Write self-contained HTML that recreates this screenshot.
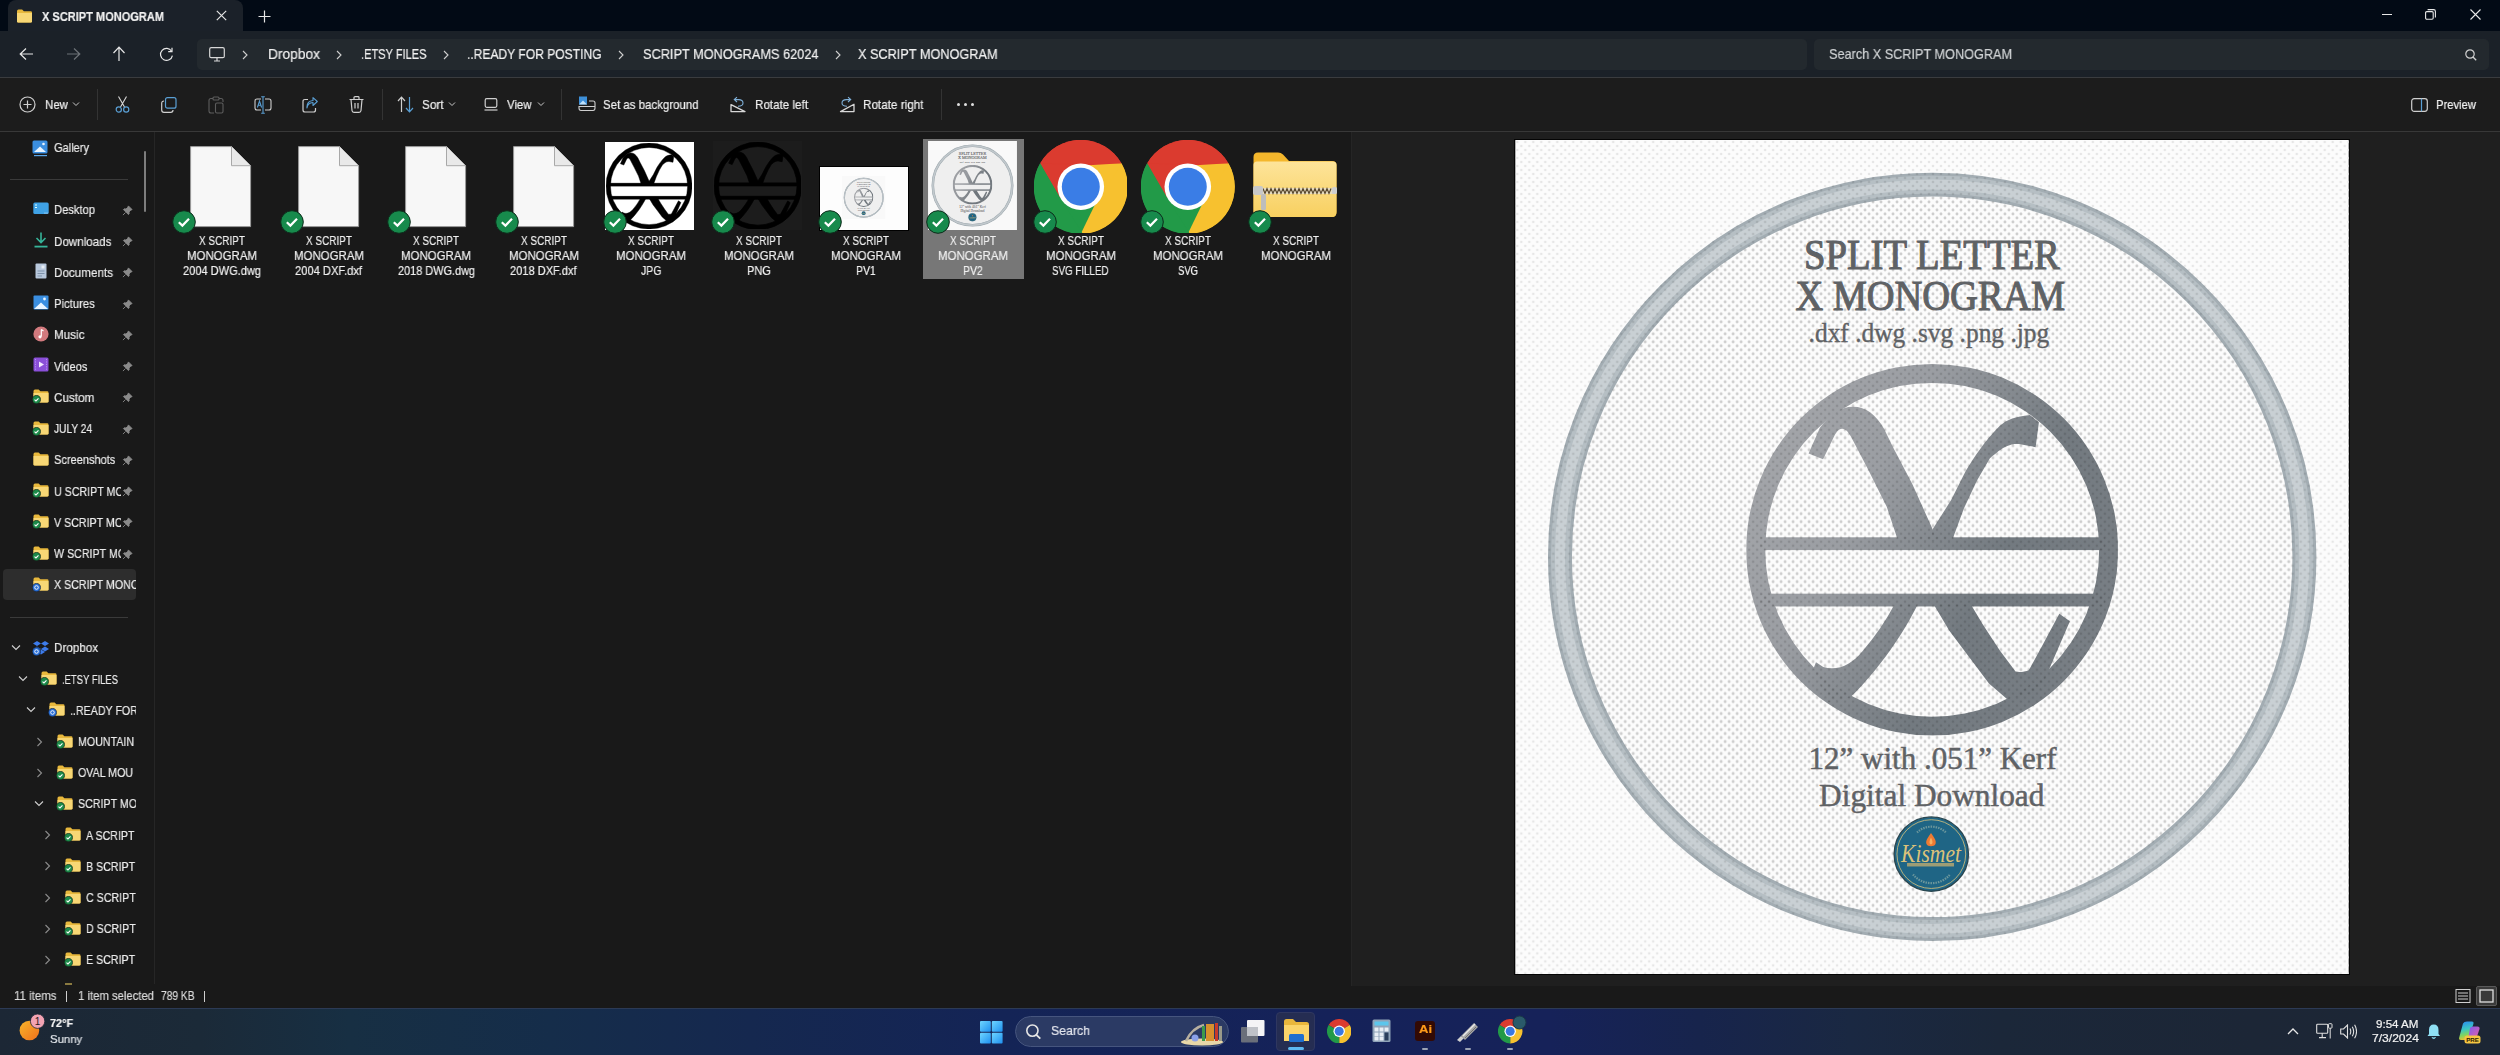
<!DOCTYPE html>
<html><head><meta charset="utf-8">
<style>
*{margin:0;padding:0;box-sizing:border-box}
html,body{width:2500px;height:1055px;overflow:hidden;background:#191919;font-family:"Liberation Sans",sans-serif;color:#e8e8e8;position:relative}
.a{position:absolute;display:block}
.t{position:absolute;white-space:nowrap;line-height:1;transform-origin:0 0;-webkit-text-stroke:0.2px currentColor;will-change:transform}
</style></head><body>
<svg width="0" height="0" style="position:absolute">
<defs>
<symbol id="fold" viewBox="0 0 16 14"><path d="M0.5 2.2 Q0.5 0.5 2 0.5 H5.6 L7.4 2.2 H14.2 Q15.5 2.2 15.5 3.6 V12.2 Q15.5 13.5 14.2 13.5 H1.8 Q0.5 13.5 0.5 12.2 Z" fill="#e8b83c"/><path d="M0.5 4 H15.5 V12.2 Q15.5 13.5 14.2 13.5 H1.8 Q0.5 13.5 0.5 12.2 Z" fill="#f8d775"/></symbol>
<symbol id="chk" viewBox="0 0 10 10"><circle cx="5" cy="5" r="4.6" fill="#1d8a4a" stroke="#111" stroke-width=".6"/><path d="M2.8 5.1 L4.4 6.6 L7.2 3.7" fill="none" stroke="#fff" stroke-width="1.2"/></symbol>
<symbol id="syn" viewBox="0 0 10 10"><circle cx="5" cy="5" r="4.6" fill="#2a6fd6" stroke="#111" stroke-width=".6"/><path d="M3 5 A2 2 0 0 1 7 5 M7 5 A2 2 0 0 1 3 5" fill="none" stroke="#fff" stroke-width="1"/></symbol>
<symbol id="pin" viewBox="0 0 12 12"><path d="M7 1 L11 5 L9.6 5.6 L7.6 7.6 L7.8 9.6 L7 10.4 L1.6 5 L2.4 4.2 L4.4 4.4 L6.4 2.4 Z M3.8 8.2 L1 11" fill="#8a8a8a" stroke="#8a8a8a" stroke-width="1" stroke-linejoin="round"/></symbol>
<symbol id="chev" viewBox="0 0 10 10"><path d="M3.5 1.5 L7 5 L3.5 8.5" fill="none" stroke="#9a9a9a" stroke-width="1.1"/></symbol>
<symbol id="chevd" viewBox="0 0 10 10"><path d="M1.5 3.2 L5 6.7 L8.5 3.2" fill="none" stroke="#cfcfcf" stroke-width="1.1"/></symbol>
<pattern id="dots" width="8.5" height="8.5" patternUnits="userSpaceOnUse"><circle cx="2" cy="2" r="1.1" fill="#c8c8c8"/><circle cx="6.25" cy="6.25" r="1.1" fill="#c8c8c8"/></pattern>
<pattern id="dotsl" width="8.5" height="8.5" patternUnits="userSpaceOnUse"><circle cx="2" cy="2" r="1" fill="#e0e0e0"/><circle cx="6.25" cy="6.25" r="1" fill="#e0e0e0"/></pattern>
<symbol id="mono" viewBox="1746 363 372 372">
<path fill-rule="evenodd" d="M1932.2 363.1 A186 186 0 1 1 1932.2 735.1 A186 186 0 1 1 1932.2 363.1 Z M1932.2 382.1 A167 167 0 1 0 1932.2 716.1 A167 167 0 1 0 1932.2 382.1 Z"/>
<rect x="1760" y="536.6" width="345" height="12.8"/>
<rect x="1760" y="593" width="345" height="12.8"/>
<path d="M1808.5 452.8 L1819.8 427 C1830 414 1840 406 1853 406 C1866 406 1876 414 1884 428 L1893 446.4 L1912.4 483.4 L1932.6 528.5 L1937 540 L1898 540 L1886.7 506 L1867.3 467.3 L1852 438 C1849 432 1846 428 1842 428 C1838 428 1836 432 1833.5 436.7 L1823 458.5 Z"/>
<path d="M1932.6 528.5 L1951 499.6 L1965.6 470.5 C1975 455 1985 440 1999.4 425.4 C2008 418 2015 416 2030 414.2 L2039 421.4 L2035.7 446.4 L2018.8 443.2 C2010 443 2004 445 1989.8 457.7 L1976.9 480 L1964 507.6 L1952 540 L1930 540 Z"/>
<path d="M1894.8 603 L1918 603 C1905 630 1880 668 1850 697 L1828 702 L1813.2 668.3 L1815.9 661.7 L1823.2 666.3 C1838 671 1852 663 1862 651 C1875 636 1886 620 1894.8 603 Z"/>
<path d="M1933.3 603 L1970.5 603 L1982.4 623.2 L1999.7 649.7 L2015.6 671 C2020 672 2025 671 2028.9 669.6 L2042 645.7 L2059.4 613.2 L2070 620.5 L2048.8 669.6 L2040 690 L2007.6 698.8 L1989 682.9 L1969.1 656.3 L1949.2 629.8 Z"/>
</symbol>
<linearGradient id="mgrad" gradientUnits="userSpaceOnUse" x1="1746" y1="450" x2="2118" y2="650"><stop offset="0" stop-color="#a4a6aa"/><stop offset="0.3" stop-color="#9b9ea3"/><stop offset="0.65" stop-color="#737a80"/><stop offset="1" stop-color="#7a8086"/></linearGradient>
<pattern id="dotsr" width="8" height="8" patternUnits="userSpaceOnUse" x="1515" y="139"><circle cx="2" cy="2" r="1.3" fill="#000" fill-opacity=".1"/><circle cx="6" cy="6" r="1.3" fill="#000" fill-opacity=".1"/></pattern>
<pattern id="dotsd" width="8" height="8" patternUnits="userSpaceOnUse" x="1515" y="139"><circle cx="2" cy="2" r="1.3" fill="#000" fill-opacity=".13"/><circle cx="6" cy="6" r="1.3" fill="#000" fill-opacity=".13"/></pattern>
<pattern id="dotsb" width="8" height="8" patternUnits="userSpaceOnUse" x="1515" y="139"><circle cx="2" cy="2" r="1.4" fill="#cdcdcd"/><circle cx="6" cy="6" r="1.4" fill="#cdcdcd"/></pattern>
<pattern id="dotsf" width="8" height="8" patternUnits="userSpaceOnUse" x="1515" y="139"><circle cx="2" cy="2" r="1.3" fill="#e6e6e6"/><circle cx="6" cy="6" r="1.3" fill="#e6e6e6"/></pattern>
<symbol id="pvimg" viewBox="1515 139 834 835">
<rect x="1515" y="139" width="834" height="835" fill="#fcfcfc"/>
<rect x="1515" y="139" width="834" height="835" fill="url(#dotsf)"/>
<circle cx="1932.2" cy="556.15" r="361" fill="url(#dotsb)"/>
<circle cx="1932.2" cy="556.15" r="372.5" fill="none" stroke="#a3adb3" stroke-width="24"/>
<circle cx="1932.2" cy="556.15" r="372.5" fill="none" stroke="#b6bfc4" stroke-width="18"/>
<circle cx="1932.2" cy="556.15" r="372.5" fill="none" stroke="#c9d0d4" stroke-width="10"/>
<circle cx="1932.2" cy="556.15" r="372.5" fill="none" stroke="url(#dotsr)" stroke-width="24"/>
<use href="#mono" x="1746" y="363" width="372" height="372" fill="url(#mgrad)"/>
<use href="#mono" x="1746" y="363" width="372" height="372" fill="url(#dotsd)"/>
<g fill="#5f6265" stroke="#5f6265" stroke-width="1.1" font-family="Liberation Serif">
<text x="1803.9" y="267.8" font-size="42.6" textLength="256.1" lengthAdjust="spacingAndGlyphs">SPLIT LETTER</text>
<text x="1795.3" y="308.9" font-size="42.6" textLength="270" lengthAdjust="spacingAndGlyphs">X MONOGRAM</text>
<text x="1808.5" y="341.4" font-size="26.3" stroke-width="0.4" textLength="240.8" lengthAdjust="spacingAndGlyphs">.dxf .dwg .svg .png .jpg</text>
<text x="1808.5" y="768.7" font-size="32" stroke-width="0.5" textLength="248.1" lengthAdjust="spacingAndGlyphs">12” with .051” Kerf</text>
<text x="1819" y="805.7" font-size="32" stroke-width="0.5" textLength="225.5" lengthAdjust="spacingAndGlyphs">Digital Download</text>
</g>
<circle cx="1931.3" cy="853.6" r="37.2" fill="#1f6585" stroke="#2b4750" stroke-width="1.4"/>
<circle cx="1931.3" cy="853.6" r="34.4" fill="none" stroke="#b5b07c" stroke-width="1"/>
<path d="M1917 832 A21 21 0 0 1 1946 832" fill="none" stroke="#a9bfae" stroke-width="2.2" stroke-dasharray="1.5 1" opacity=".55"/>
<path d="M1913 874 A24 24 0 0 0 1950 874" fill="none" stroke="#a9bfae" stroke-width="2.2" stroke-dasharray="1.5 1" opacity=".55"/>
<path d="M1931 832.5 C1927 838 1925.5 841 1926.5 843.5 C1927.5 846.5 1934.5 846.5 1935.5 843.5 C1936.5 841 1935 838 1931 832.5 Z" fill="#ef7a32"/>
<path d="M1931 837 C1929.5 840 1929 842 1930 843.5 C1931 844.5 1932.5 843.5 1932.5 842 C1932.5 840.5 1932 839 1931 837 Z" fill="#f8b060"/>
<text x="1901" y="862" font-size="26" font-family="Liberation Serif" font-style="italic" fill="#dcc27a" textLength="60" lengthAdjust="spacingAndGlyphs">Kismet</text>
<rect x="1907" y="862.5" width="47" height="3.5" fill="#c8b070" opacity=".75"/>
</symbol>
</defs></svg>
<div class="a" style="left:0px;top:0px;width:2500px;height:31px;background:#020a15;"></div>
<div class="a" style="left:8px;top:0px;width:235px;height:31px;background:#1b2129;border-radius:8px 8px 0 0"></div>
<div class="a" style="left:0px;top:31px;width:2500px;height:46px;background:#1b2128;"></div>
<div class="a" style="left:197px;top:39px;width:1610px;height:31px;background:#23292e;border-radius:5px"></div>
<div class="a" style="left:1814px;top:39px;width:675px;height:31px;background:#23292e;border-radius:5px"></div>
<div class="a" style="left:0px;top:77px;width:2500px;height:1px;background:#3a3c3f;"></div>
<div class="a" style="left:0px;top:78px;width:2500px;height:53px;background:#1c1c1c;"></div>
<div class="a" style="left:0px;top:131px;width:2500px;height:1px;background:#383838;"></div>
<div class="a" style="left:0px;top:132px;width:154px;height:852px;background:#191919;"></div>
<div class="a" style="left:154px;top:132px;width:1px;height:852px;background:#262626;"></div>
<div class="a" style="left:155px;top:132px;width:1196px;height:852px;background:#191919;"></div>
<div class="a" style="left:0px;top:984px;width:2500px;height:24px;background:#191919;"></div>
<div class="a" style="left:1351px;top:132px;width:1px;height:854px;background:#252525;"></div>
<div class="a" style="left:1352px;top:132px;width:1148px;height:854px;background:#1f1f1f;"></div>
<div class="a" style="left:0px;top:1008px;width:2500px;height:47px;background:linear-gradient(90deg,#1c2735 0%,#1b2a38 8%,#172f43 14%,#152d4a 22%,#15284f 30%,#142456 40%,#152259 52%,#162259 62%,#17244c 68%,#1a2842 74%,#1b2739 80%,#1c2636 90%,#1c2634 100%);"></div>
<div class="a" style="left:0px;top:1008px;width:2500px;height:1px;background:#2c3a55;"></div>
<svg class="a" style="left:16px;top:9px;" width="17" height="14" viewBox="0 0 17 14"><use href="#fold" width="17" height="14"/></svg>
<div class="t" style="left:42.00px;top:9.92px;font-size:13px;color:#f2f2f2;font-family:'Liberation Sans';font-weight:700;transform:scaleX(0.8488);">X SCRIPT MONOGRAM</div>
<svg class="a" style="left:216px;top:10px;" width="11" height="11" viewBox="0 0 11 11"><path d="M0.8 0.8 L10.2 10.2 M10.2 0.8 L0.8 10.2" stroke="#e6e6e6" stroke-width="1.2"/></svg>
<svg class="a" style="left:258px;top:10px;" width="13" height="13" viewBox="0 0 13 13"><path d="M6.5 0.5 V12.5 M0.5 6.5 H12.5" stroke="#e6e6e6" stroke-width="1.2"/></svg>
<div class="a" style="left:2382px;top:14px;width:10px;height:1.2px;background:#e8e8e8;"></div>
<svg class="a" style="left:2425px;top:9px;" width="11" height="11" viewBox="0 0 11 11"><rect x="0.6" y="2.6" width="7.6" height="7.6" rx="1.2" fill="none" stroke="#e8e8e8" stroke-width="1.1"/><path d="M2.6 0.6 H8.6 Q10.4 0.6 10.4 2.4 V8.4" fill="none" stroke="#e8e8e8" stroke-width="1.1"/></svg>
<svg class="a" style="left:2470px;top:9px;" width="11" height="11" viewBox="0 0 11 11"><path d="M0.5 0.5 L10.5 10.5 M10.5 0.5 L0.5 10.5" stroke="#e8e8e8" stroke-width="1.1"/></svg>
<svg class="a" style="left:19px;top:47px;" width="15" height="14" viewBox="0 0 15 14"><path d="M14 7 H1.5 M7 1.5 L1.2 7 L7 12.5" fill="none" stroke="#e8e8e8" stroke-width="1.2"/></svg>
<svg class="a" style="left:66px;top:47px;" width="15" height="14" viewBox="0 0 15 14"><path d="M1 7 H13.5 M8 1.5 L13.8 7 L8 12.5" fill="none" stroke="#6d7277" stroke-width="1.2"/></svg>
<svg class="a" style="left:112px;top:46px;" width="14" height="16" viewBox="0 0 14 16"><path d="M7 15 V1.5 M1.5 7 L7 1.2 L12.5 7" fill="none" stroke="#e8e8e8" stroke-width="1.2"/></svg>
<svg class="a" style="left:159px;top:47px;" width="15" height="15" viewBox="0 0 15 15"><path d="M12.6 4.2 A6 6 0 1 0 13.4 8.6" fill="none" stroke="#e8e8e8" stroke-width="1.2"/><path d="M13 0.8 V4.6 H9.2" fill="none" stroke="#e8e8e8" stroke-width="1.2"/></svg>
<svg class="a" style="left:209px;top:47px;" width="16" height="15" viewBox="0 0 16 15"><rect x="0.7" y="0.7" width="14.6" height="10" rx="1.5" fill="none" stroke="#d8d8d8" stroke-width="1.2"/><path d="M5 14 H11 M8 10.7 V14" stroke="#d8d8d8" stroke-width="1.2"/></svg>
<svg class="a" style="left:241px;top:50px;" width="8" height="10" viewBox="0 0 8 10"><path d="M2 1 L6 5 L2 9" fill="none" stroke="#d0d0d0" stroke-width="1.1"/></svg>
<svg class="a" style="left:335px;top:50px;" width="8" height="10" viewBox="0 0 8 10"><path d="M2 1 L6 5 L2 9" fill="none" stroke="#d0d0d0" stroke-width="1.1"/></svg>
<svg class="a" style="left:442px;top:50px;" width="8" height="10" viewBox="0 0 8 10"><path d="M2 1 L6 5 L2 9" fill="none" stroke="#d0d0d0" stroke-width="1.1"/></svg>
<svg class="a" style="left:617px;top:50px;" width="8" height="10" viewBox="0 0 8 10"><path d="M2 1 L6 5 L2 9" fill="none" stroke="#d0d0d0" stroke-width="1.1"/></svg>
<svg class="a" style="left:834px;top:50px;" width="8" height="10" viewBox="0 0 8 10"><path d="M2 1 L6 5 L2 9" fill="none" stroke="#d0d0d0" stroke-width="1.1"/></svg>
<div class="t" style="left:268.00px;top:47.18px;font-size:14.5px;color:#f0f0f0;font-family:'Liberation Sans';transform:scaleX(0.9487);">Dropbox</div>
<div class="t" style="left:360.50px;top:47.18px;font-size:14.5px;color:#f0f0f0;font-family:'Liberation Sans';transform:scaleX(0.7619);">.ETSY FILES</div>
<div class="t" style="left:467.00px;top:47.18px;font-size:14.5px;color:#f0f0f0;font-family:'Liberation Sans';transform:scaleX(0.8319);">..READY FOR POSTING</div>
<div class="t" style="left:642.50px;top:47.18px;font-size:14.5px;color:#f0f0f0;font-family:'Liberation Sans';transform:scaleX(0.8794);">SCRIPT MONOGRAMS 62024</div>
<div class="t" style="left:858.00px;top:47.18px;font-size:14.5px;color:#f0f0f0;font-family:'Liberation Sans';transform:scaleX(0.8760);">X SCRIPT MONOGRAM</div>
<div class="t" style="left:1829.00px;top:46.68px;font-size:14.5px;color:#cfd2d4;font-family:'Liberation Sans';transform:scaleX(0.8747);">Search X SCRIPT MONOGRAM</div>
<svg class="a" style="left:2465px;top:49px;" width="12" height="12" viewBox="0 0 12 12"><circle cx="5" cy="5" r="4.2" fill="none" stroke="#d0d0d0" stroke-width="1.2"/><path d="M8 8 L11.2 11.2" stroke="#d0d0d0" stroke-width="1.3"/></svg>
<svg class="a" style="left:19px;top:96px;" width="17" height="17" viewBox="0 0 17 17"><circle cx="8.5" cy="8.5" r="7.5" fill="none" stroke="#cfcfcf" stroke-width="1.2"/><path d="M8.5 4.5 V12.5 M4.5 8.5 H12.5" stroke="#cfcfcf" stroke-width="1.2"/></svg>
<div class="t" style="left:44.50px;top:98.42px;font-size:13px;color:#f0f0f0;font-family:'Liberation Sans';transform:scaleX(0.8841);">New</div>
<svg class="a" style="left:72px;top:101px;" width="8" height="6" viewBox="0 0 8 6"><path d="M1 1.5 L4 4.5 L7 1.5" fill="none" stroke="#c8c8c8" stroke-width="1"/></svg>
<div class="a" style="left:97px;top:89px;width:1px;height:31px;background:#333333;"></div>
<svg class="a" style="left:115px;top:96px;" width="15" height="17" viewBox="0 0 15 17"><path d="M3.5 0.5 L9.5 11 M11.5 0.5 L5.5 11" stroke="#d8d8d8" stroke-width="1.1" fill="none"/><circle cx="3.8" cy="13.5" r="2.6" fill="none" stroke="#5a9fd4" stroke-width="1.2"/><circle cx="11.2" cy="13.5" r="2.6" fill="none" stroke="#5a9fd4" stroke-width="1.2"/></svg>
<svg class="a" style="left:161px;top:97px;" width="16" height="16" viewBox="0 0 16 16"><rect x="4.5" y="0.7" width="10.5" height="10.5" rx="2" fill="none" stroke="#5a9fd4" stroke-width="1.2"/><path d="M3 4 Q0.7 4 0.7 6.3 V13 Q0.7 15.3 3 15.3 H9.7 Q12 15.3 12 13" fill="none" stroke="#cfcfcf" stroke-width="1.2"/></svg>
<svg class="a" style="left:208px;top:96px;" width="16" height="18" viewBox="0 0 16 18"><path d="M5 2.5 H3 Q1 2.5 1 4.5 V15 Q1 17 3 17 H6 M11 2.5 H13 Q15 2.5 15 4.5 V6" fill="none" stroke="#5d5d5d" stroke-width="1.1"/><rect x="5" y="1" width="6" height="3" rx="1" fill="none" stroke="#5d5d5d" stroke-width="1.1"/><rect x="7.5" y="7" width="7.5" height="10" rx="1.5" fill="none" stroke="#5d5d5d" stroke-width="1.1"/></svg>
<svg class="a" style="left:254px;top:96px;" width="18" height="18" viewBox="0 0 18 18"><path d="M7 3 H3 Q1 3 1 5 V12 Q1 14 3 14 H7 M11 3 H15 Q17 3 17 5 V12 Q17 14 15 14 H11" fill="none" stroke="#cfcfcf" stroke-width="1.1"/><path d="M9 0.7 V17.3 M7.2 0.7 H10.8 M7.2 17.3 H10.8" stroke="#5a9fd4" stroke-width="1.1"/><path d="M3.4 11.5 L5.5 5 L7.6 11.5 M4.2 9.3 H6.8" fill="none" stroke="#5a9fd4" stroke-width="1.1"/></svg>
<svg class="a" style="left:302px;top:97px;" width="16" height="16" viewBox="0 0 16 16"><path d="M6 2.5 H3 Q1 2.5 1 4.5 V13 Q1 15 3 15 H11.5 Q13.5 15 13.5 13 V11" fill="none" stroke="#cfcfcf" stroke-width="1.2"/><path d="M5 11 Q5.5 6 11 5.5 V8.5 L15.3 4.5 L11 0.7 V3.5 Q4.5 4 5 11 Z" fill="none" stroke="#5a9fd4" stroke-width="1.1" stroke-linejoin="round"/></svg>
<svg class="a" style="left:349px;top:96px;" width="15" height="17" viewBox="0 0 15 17"><path d="M0.5 3.5 H14.5 M5 3.5 V1.5 Q5 0.7 6 0.7 H9 Q10 0.7 10 1.5 V3.5" fill="none" stroke="#cfcfcf" stroke-width="1.2"/><path d="M2 3.5 L3 14.5 Q3.2 16.3 5 16.3 H10 Q11.8 16.3 12 14.5 L13 3.5 M6 7 V12.5 M9 7 V12.5" fill="none" stroke="#cfcfcf" stroke-width="1.2"/></svg>
<div class="a" style="left:382px;top:89px;width:1px;height:31px;background:#333333;"></div>
<svg class="a" style="left:397px;top:96px;" width="17" height="17" viewBox="0 0 17 17"><path d="M4.5 16 V1.5 M1 5 L4.5 1.2 L8 5" fill="none" stroke="#cfcfcf" stroke-width="1.2"/><path d="M12.5 1 V15.5 M9 12 L12.5 15.8 L16 12" fill="none" stroke="#5a9fd4" stroke-width="1.2"/></svg>
<div class="t" style="left:422.00px;top:98.42px;font-size:13px;color:#f0f0f0;font-family:'Liberation Sans';transform:scaleX(0.9017);">Sort</div>
<svg class="a" style="left:448px;top:101px;" width="8" height="6" viewBox="0 0 8 6"><path d="M1 1.5 L4 4.5 L7 1.5" fill="none" stroke="#c8c8c8" stroke-width="1"/></svg>
<svg class="a" style="left:484px;top:98px;" width="14" height="13" viewBox="0 0 14 13"><rect x="1.2" y="0.7" width="11.6" height="8.6" rx="1.5" fill="none" stroke="#cfcfcf" stroke-width="1.2"/><path d="M0.5 12 H13.5" stroke="#cfcfcf" stroke-width="1.2"/></svg>
<div class="t" style="left:507.00px;top:98.42px;font-size:13px;color:#f0f0f0;font-family:'Liberation Sans';transform:scaleX(0.8765);">View</div>
<svg class="a" style="left:537px;top:101px;" width="8" height="6" viewBox="0 0 8 6"><path d="M1 1.5 L4 4.5 L7 1.5" fill="none" stroke="#c8c8c8" stroke-width="1"/></svg>
<div class="a" style="left:561px;top:89px;width:1px;height:31px;background:#333333;"></div>
<svg class="a" style="left:578px;top:96px;" width="18" height="16" viewBox="0 0 18 16"><rect x="1" y="0.5" width="8" height="8" fill="#3d8fd8"/><path d="M1 8.5 L5 4.5 L9 8.5 Z" fill="#bfe0fa"/><path d="M11 5 H15 Q17 5 17 7 V12 Q17 14.5 15 14.5 H3 Q1 14.5 1 12 V10.5 H17" fill="none" stroke="#cfcfcf" stroke-width="1.1"/></svg>
<div class="t" style="left:602.50px;top:98.42px;font-size:13px;color:#f0f0f0;font-family:'Liberation Sans';transform:scaleX(0.8809);">Set as background</div>
<svg class="a" style="left:729px;top:96px;" width="18" height="18" viewBox="0 0 18 18"><path d="M2 8.6 V15.6 L16 15.6 Z" fill="none" stroke="#d8d8d8" stroke-width="1.3" stroke-linejoin="round"/><path d="M9 10.2 Q14 10.2 14 7 Q14 3.6 9.5 3.6 H5.5 M8 1.2 L5.3 3.6 L8 6" fill="none" stroke="#7fb0d8" stroke-width="1.1"/></svg>
<div class="t" style="left:754.50px;top:98.42px;font-size:13px;color:#f0f0f0;font-family:'Liberation Sans';transform:scaleX(0.8943);">Rotate left</div>
<svg class="a" style="left:838px;top:96px;" width="18" height="18" viewBox="0 0 18 18"><path d="M16 8.2 V15.6 L2.5 15.6 Z" fill="none" stroke="#d8d8d8" stroke-width="1.3" stroke-linejoin="round"/><path d="M9 10.2 Q4 10.2 4 7 Q4 3.6 8.5 3.6 H12.5 M10 1.2 L12.7 3.6 L10 6" fill="none" stroke="#7fb0d8" stroke-width="1.1"/></svg>
<div class="t" style="left:863.00px;top:98.42px;font-size:13px;color:#f0f0f0;font-family:'Liberation Sans';transform:scaleX(0.9003);">Rotate right</div>
<div class="a" style="left:941px;top:89px;width:1px;height:31px;background:#333333;"></div>
<div class="a" style="left:957.0px;top:103px;width:3px;height:3px;background:#e0e0e0;border-radius:50%"></div>
<div class="a" style="left:964.0px;top:103px;width:3px;height:3px;background:#e0e0e0;border-radius:50%"></div>
<div class="a" style="left:971.0px;top:103px;width:3px;height:3px;background:#e0e0e0;border-radius:50%"></div>
<svg class="a" style="left:2411px;top:98px;" width="17" height="14" viewBox="0 0 17 14"><rect x="0.7" y="0.7" width="15.6" height="12.6" rx="2.5" fill="none" stroke="#cfcfcf" stroke-width="1.2"/><path d="M10.5 0.7 V13.3" stroke="#5a9fd4" stroke-width="1.2"/></svg>
<div class="t" style="left:2435.50px;top:97.92px;font-size:13px;color:#f0f0f0;font-family:'Liberation Sans';transform:scaleX(0.8649);">Preview</div>
<svg class="a" style="left:32px;top:140px;" width="17" height="17" viewBox="0 0 17 17"><rect x="0.5" y="0.5" width="15" height="13" rx="1.5" fill="#3a8ee0"/><path d="M2 12 L8 6.5 L14 12 Z" fill="#e8f4ff"/><circle cx="11.5" cy="4" r="1.3" fill="#e8f4ff"/><path d="M2 15.6 H15" stroke="#5aa6ea" stroke-width="1.2"/></svg>
<div class="t" style="left:54.00px;top:140.72px;font-size:13px;color:#ececec;font-family:'Liberation Sans';transform:scaleX(0.8498);">Gallery</div>
<div class="a" style="left:10px;top:179px;width:118px;height:1px;background:#3a3a3a;"></div>
<div class="a" style="left:144px;top:151px;width:2px;height:61px;background:#7d7d7d;border-radius:1px"></div>
<div class="a" style="left:3px;top:569px;width:133px;height:31px;background:#2d2d2d;border-radius:4px"></div>
<svg class="a" style="left:33px;top:202px;" width="16" height="13" viewBox="0 0 16 13"><rect x="0.3" y="0.5" width="15.4" height="11.5" rx="1.5" fill="#3fa2e6"/><rect x="2" y="2.5" width="2" height="1" fill="#dff"/><rect x="2" y="5" width="2" height="1" fill="#dff"/><circle cx="12" cy="11" r=".5" fill="#fff"/><circle cx="14" cy="11" r=".5" fill="#fff"/></svg>
<div class="t" style="left:54.00px;top:203.32px;font-size:13px;color:#ececec;font-family:'Liberation Sans';transform:scaleX(0.8595);">Desktop</div>
<svg class="a" style="left:122px;top:205px;" width="11" height="11" viewBox="0 0 11 11"><use href="#pin" width="11" height="11"/></svg>
<svg class="a" style="left:34px;top:232px;" width="14" height="16" viewBox="0 0 14 16"><path d="M7 0.5 V10 M2.5 6 L7 10.5 L11.5 6" fill="none" stroke="#36b59a" stroke-width="1.6"/><path d="M0.5 14.6 H13.5" stroke="#36b59a" stroke-width="1.8"/></svg>
<div class="t" style="left:54.00px;top:234.57px;font-size:13px;color:#ececec;font-family:'Liberation Sans';transform:scaleX(0.8939);">Downloads</div>
<svg class="a" style="left:122px;top:236px;" width="11" height="11" viewBox="0 0 11 11"><use href="#pin" width="11" height="11"/></svg>
<svg class="a" style="left:35px;top:263px;" width="12" height="16" viewBox="0 0 12 16"><rect x="0.5" y="0.5" width="11" height="15" rx="1" fill="#b8c8dc"/><rect x="6.5" y="2.5" width="3" height="3" fill="#e8eef6"/><path d="M2.5 8 H9.5 M2.5 10.5 H9.5 M2.5 13 H7" stroke="#7f93ab" stroke-width="1"/></svg>
<div class="t" style="left:54.00px;top:265.82px;font-size:13px;color:#ececec;font-family:'Liberation Sans';transform:scaleX(0.8973);">Documents</div>
<svg class="a" style="left:122px;top:267px;" width="11" height="11" viewBox="0 0 11 11"><use href="#pin" width="11" height="11"/></svg>
<svg class="a" style="left:33px;top:295px;" width="16" height="15" viewBox="0 0 16 15"><rect x="0.5" y="0.5" width="15" height="14" rx="1" fill="#3a8ee0"/><path d="M1 14 L8 7.5 L15 14 Z" fill="#e8f4ff"/><circle cx="11.5" cy="4" r="1.4" fill="#e8f4ff"/></svg>
<div class="t" style="left:54.00px;top:297.07px;font-size:13px;color:#ececec;font-family:'Liberation Sans';transform:scaleX(0.8665);">Pictures</div>
<svg class="a" style="left:122px;top:299px;" width="11" height="11" viewBox="0 0 11 11"><use href="#pin" width="11" height="11"/></svg>
<svg class="a" style="left:33px;top:326px;" width="16" height="16" viewBox="0 0 16 16"><circle cx="8" cy="8" r="7.6" fill="#d27a7e"/><path d="M8.3 3.5 V10.5" stroke="#fff" stroke-width="1.2"/><circle cx="7" cy="10.8" r="1.6" fill="#fff"/><path d="M8.3 3.5 L10.5 5" stroke="#fff" stroke-width="1.2"/></svg>
<div class="t" style="left:54.00px;top:328.32px;font-size:13px;color:#ececec;font-family:'Liberation Sans';transform:scaleX(0.8983);">Music</div>
<svg class="a" style="left:122px;top:330px;" width="11" height="11" viewBox="0 0 11 11"><use href="#pin" width="11" height="11"/></svg>
<svg class="a" style="left:33px;top:357px;" width="16" height="15" viewBox="0 0 16 15"><rect x="0.5" y="0.5" width="15" height="14" rx="1.5" fill="#8a4fd8"/><path d="M6 4.5 L11 7.5 L6 10.5 Z" fill="#f2e8ff"/><path d="M2.5 2 V13 M13.5 2 V13" stroke="#b58cf0" stroke-width="1" stroke-dasharray="1.2 1.2"/></svg>
<div class="t" style="left:54.00px;top:359.57px;font-size:13px;color:#ececec;font-family:'Liberation Sans';transform:scaleX(0.8427);">Videos</div>
<svg class="a" style="left:122px;top:361px;" width="11" height="11" viewBox="0 0 11 11"><use href="#pin" width="11" height="11"/></svg>
<svg class="a" style="left:33px;top:389px" width="16" height="14"><use href="#fold" width="16" height="14"/></svg>
<svg class="a" style="left:32px;top:395px" width="9" height="9"><use href="#chk" width="9" height="9"/></svg>
<div class="t" style="left:54.00px;top:390.82px;font-size:13px;color:#ececec;font-family:'Liberation Sans';transform:scaleX(0.8996);">Custom</div>
<svg class="a" style="left:122px;top:392px;" width="11" height="11" viewBox="0 0 11 11"><use href="#pin" width="11" height="11"/></svg>
<svg class="a" style="left:33px;top:421px" width="16" height="14"><use href="#fold" width="16" height="14"/></svg>
<svg class="a" style="left:32px;top:427px" width="9" height="9"><use href="#chk" width="9" height="9"/></svg>
<div class="t" style="left:54.00px;top:422.07px;font-size:13px;color:#ececec;font-family:'Liberation Sans';transform:scaleX(0.7807);">JULY 24</div>
<svg class="a" style="left:122px;top:424px;" width="11" height="11" viewBox="0 0 11 11"><use href="#pin" width="11" height="11"/></svg>
<svg class="a" style="left:33px;top:452px" width="16" height="14"><use href="#fold" width="16" height="14"/></svg>
<div class="t" style="left:54.00px;top:453.32px;font-size:13px;color:#ececec;font-family:'Liberation Sans';transform:scaleX(0.8469);">Screenshots</div>
<svg class="a" style="left:122px;top:455px;" width="11" height="11" viewBox="0 0 11 11"><use href="#pin" width="11" height="11"/></svg>
<svg class="a" style="left:33px;top:483px" width="16" height="14"><use href="#fold" width="16" height="14"/></svg>
<svg class="a" style="left:32px;top:489px" width="9" height="9"><use href="#chk" width="9" height="9"/></svg>
<div class="t" style="left:54.00px;top:484.57px;font-size:13px;color:#ececec;font-family:'Liberation Sans';transform:scaleX(0.8200);width:81.7px;overflow:hidden;">U SCRIPT MC</div>
<svg class="a" style="left:122px;top:486px;" width="11" height="11" viewBox="0 0 11 11"><use href="#pin" width="11" height="11"/></svg>
<svg class="a" style="left:33px;top:514px" width="16" height="14"><use href="#fold" width="16" height="14"/></svg>
<svg class="a" style="left:32px;top:520px" width="9" height="9"><use href="#chk" width="9" height="9"/></svg>
<div class="t" style="left:54.00px;top:515.82px;font-size:13px;color:#ececec;font-family:'Liberation Sans';transform:scaleX(0.8200);width:81.7px;overflow:hidden;">V SCRIPT MC</div>
<svg class="a" style="left:122px;top:517px;" width="11" height="11" viewBox="0 0 11 11"><use href="#pin" width="11" height="11"/></svg>
<svg class="a" style="left:33px;top:546px" width="16" height="14"><use href="#fold" width="16" height="14"/></svg>
<svg class="a" style="left:32px;top:552px" width="9" height="9"><use href="#chk" width="9" height="9"/></svg>
<div class="t" style="left:54.00px;top:547.07px;font-size:13px;color:#ececec;font-family:'Liberation Sans';transform:scaleX(0.8200);width:81.7px;overflow:hidden;">W SCRIPT MC</div>
<svg class="a" style="left:122px;top:549px;" width="11" height="11" viewBox="0 0 11 11"><use href="#pin" width="11" height="11"/></svg>
<svg class="a" style="left:33px;top:577px" width="16" height="14"><use href="#fold" width="16" height="14"/></svg>
<svg class="a" style="left:32px;top:583px" width="9" height="9"><use href="#syn" width="9" height="9"/></svg>
<div class="t" style="left:54.00px;top:578.32px;font-size:13px;color:#ececec;font-family:'Liberation Sans';transform:scaleX(0.8200);width:100.0px;overflow:hidden;">X SCRIPT MONOGRAM</div>
<div class="a" style="left:10px;top:616.5px;width:118px;height:1px;background:#3a3a3a;"></div>
<svg class="a" style="left:11px;top:644px;" width="10" height="8" viewBox="0 0 10 8"><path d="M1 1.5 L5 5.5 L9 1.5" fill="none" stroke="#d0d0d0" stroke-width="1.1"/></svg>
<svg class="a" style="left:33px;top:640px;" width="17" height="15" viewBox="0 0 17 15"><path d="M4 1 L8 3.5 L4 6 L0 3.5 Z M12 1 L16 3.5 L12 6 L8 3.5 Z M4 6.5 L8 9 L4 11.5 L0 9 Z M12 6.5 L16 9 L12 11.5 L8 9 Z M4 12 L8 9.6 L12 12 L8 14.4 Z" fill="#3d7bea"/></svg>
<svg class="a" style="left:32px;top:647px" width="9" height="9"><use href="#syn" width="9" height="9"/></svg>
<div class="t" style="left:54.00px;top:641.32px;font-size:13px;color:#ececec;font-family:'Liberation Sans';transform:scaleX(0.8954);width:91.6px;overflow:hidden;">Dropbox</div>
<svg class="a" style="left:18px;top:675px;" width="10" height="8" viewBox="0 0 10 8"><path d="M1 1.5 L5 5.5 L9 1.5" fill="none" stroke="#d0d0d0" stroke-width="1.1"/></svg>
<svg class="a" style="left:41px;top:671px" width="16" height="14"><use href="#fold" width="16" height="14"/></svg>
<svg class="a" style="left:40px;top:677px" width="9" height="9"><use href="#chk" width="9" height="9"/></svg>
<div class="t" style="left:61.90px;top:672.52px;font-size:13px;color:#ececec;font-family:'Liberation Sans';transform:scaleX(0.7265);width:102.0px;overflow:hidden;">.ETSY FILES</div>
<svg class="a" style="left:26px;top:706px;" width="10" height="8" viewBox="0 0 10 8"><path d="M1 1.5 L5 5.5 L9 1.5" fill="none" stroke="#d0d0d0" stroke-width="1.1"/></svg>
<svg class="a" style="left:49px;top:702px" width="16" height="14"><use href="#fold" width="16" height="14"/></svg>
<svg class="a" style="left:48px;top:708px" width="9" height="9"><use href="#syn" width="9" height="9"/></svg>
<div class="t" style="left:69.80px;top:703.72px;font-size:13px;color:#ececec;font-family:'Liberation Sans';transform:scaleX(0.8200);width:80.7px;overflow:hidden;">..READY FOR</div>
<svg class="a" style="left:36px;top:737px;" width="7" height="10" viewBox="0 0 7 10"><path d="M1.5 1 L5.5 5 L1.5 9" fill="none" stroke="#8c8c8c" stroke-width="1.1"/></svg>
<svg class="a" style="left:57px;top:734px" width="16" height="14"><use href="#fold" width="16" height="14"/></svg>
<svg class="a" style="left:56px;top:740px" width="9" height="9"><use href="#chk" width="9" height="9"/></svg>
<div class="t" style="left:77.70px;top:734.92px;font-size:13px;color:#ececec;font-family:'Liberation Sans';transform:scaleX(0.8200);width:71.1px;overflow:hidden;">MOUNTAIN</div>
<svg class="a" style="left:36px;top:768px;" width="7" height="10" viewBox="0 0 7 10"><path d="M1.5 1 L5.5 5 L1.5 9" fill="none" stroke="#8c8c8c" stroke-width="1.1"/></svg>
<svg class="a" style="left:57px;top:765px" width="16" height="14"><use href="#fold" width="16" height="14"/></svg>
<svg class="a" style="left:56px;top:771px" width="9" height="9"><use href="#chk" width="9" height="9"/></svg>
<div class="t" style="left:77.70px;top:766.12px;font-size:13px;color:#ececec;font-family:'Liberation Sans';transform:scaleX(0.8200);width:71.1px;overflow:hidden;">OVAL MOU</div>
<svg class="a" style="left:34px;top:800px;" width="10" height="8" viewBox="0 0 10 8"><path d="M1 1.5 L5 5.5 L9 1.5" fill="none" stroke="#d0d0d0" stroke-width="1.1"/></svg>
<svg class="a" style="left:57px;top:796px" width="16" height="14"><use href="#fold" width="16" height="14"/></svg>
<svg class="a" style="left:56px;top:802px" width="9" height="9"><use href="#chk" width="9" height="9"/></svg>
<div class="t" style="left:77.70px;top:797.32px;font-size:13px;color:#ececec;font-family:'Liberation Sans';transform:scaleX(0.8200);width:71.1px;overflow:hidden;">SCRIPT MO</div>
<svg class="a" style="left:44px;top:830px;" width="7" height="10" viewBox="0 0 7 10"><path d="M1.5 1 L5.5 5 L1.5 9" fill="none" stroke="#8c8c8c" stroke-width="1.1"/></svg>
<svg class="a" style="left:65px;top:827px" width="16" height="14"><use href="#fold" width="16" height="14"/></svg>
<svg class="a" style="left:64px;top:833px" width="9" height="9"><use href="#chk" width="9" height="9"/></svg>
<div class="t" style="left:85.60px;top:828.52px;font-size:13px;color:#ececec;font-family:'Liberation Sans';transform:scaleX(0.8200);width:61.5px;overflow:hidden;">A SCRIPT</div>
<svg class="a" style="left:44px;top:861px;" width="7" height="10" viewBox="0 0 7 10"><path d="M1.5 1 L5.5 5 L1.5 9" fill="none" stroke="#8c8c8c" stroke-width="1.1"/></svg>
<svg class="a" style="left:65px;top:858px" width="16" height="14"><use href="#fold" width="16" height="14"/></svg>
<svg class="a" style="left:64px;top:864px" width="9" height="9"><use href="#chk" width="9" height="9"/></svg>
<div class="t" style="left:85.60px;top:859.72px;font-size:13px;color:#ececec;font-family:'Liberation Sans';transform:scaleX(0.8200);width:61.5px;overflow:hidden;">B SCRIPT I</div>
<svg class="a" style="left:44px;top:893px;" width="7" height="10" viewBox="0 0 7 10"><path d="M1.5 1 L5.5 5 L1.5 9" fill="none" stroke="#8c8c8c" stroke-width="1.1"/></svg>
<svg class="a" style="left:65px;top:890px" width="16" height="14"><use href="#fold" width="16" height="14"/></svg>
<svg class="a" style="left:64px;top:896px" width="9" height="9"><use href="#chk" width="9" height="9"/></svg>
<div class="t" style="left:85.60px;top:890.92px;font-size:13px;color:#ececec;font-family:'Liberation Sans';transform:scaleX(0.8200);width:61.5px;overflow:hidden;">C SCRIPT</div>
<svg class="a" style="left:44px;top:924px;" width="7" height="10" viewBox="0 0 7 10"><path d="M1.5 1 L5.5 5 L1.5 9" fill="none" stroke="#8c8c8c" stroke-width="1.1"/></svg>
<svg class="a" style="left:65px;top:921px" width="16" height="14"><use href="#fold" width="16" height="14"/></svg>
<svg class="a" style="left:64px;top:927px" width="9" height="9"><use href="#chk" width="9" height="9"/></svg>
<div class="t" style="left:85.60px;top:922.12px;font-size:13px;color:#ececec;font-family:'Liberation Sans';transform:scaleX(0.8200);width:61.5px;overflow:hidden;">D SCRIPT</div>
<svg class="a" style="left:44px;top:955px;" width="7" height="10" viewBox="0 0 7 10"><path d="M1.5 1 L5.5 5 L1.5 9" fill="none" stroke="#8c8c8c" stroke-width="1.1"/></svg>
<svg class="a" style="left:65px;top:952px" width="16" height="14"><use href="#fold" width="16" height="14"/></svg>
<svg class="a" style="left:64px;top:958px" width="9" height="9"><use href="#chk" width="9" height="9"/></svg>
<div class="t" style="left:85.60px;top:953.32px;font-size:13px;color:#ececec;font-family:'Liberation Sans';transform:scaleX(0.8200);width:61.5px;overflow:hidden;">E SCRIPT I</div>
<div class="a" style="left:65px;top:983px;width:7px;height:2px;background:#8a7a40;"></div>
<div class="t" style="left:14.00px;top:990.00px;font-size:12.5px;color:#dcdcdc;font-family:'Liberation Sans';transform:scaleX(0.9174);">11 items</div>
<div class="a" style="left:66px;top:991px;width:1px;height:11px;background:#cfcfcf;"></div>
<div class="t" style="left:78.00px;top:990.00px;font-size:12.5px;color:#dcdcdc;font-family:'Liberation Sans';transform:scaleX(0.9039);">1 item selected</div>
<div class="t" style="left:160.50px;top:990.00px;font-size:12.5px;color:#dcdcdc;font-family:'Liberation Sans';transform:scaleX(0.8168);">789 KB</div>
<div class="a" style="left:204px;top:991px;width:1px;height:11px;background:#cfcfcf;"></div>
<svg class="a" style="left:2455px;top:988px;" width="16" height="16" viewBox="0 0 16 16"><rect x="1" y="1.5" width="14" height="13" fill="none" stroke="#cfcfcf" stroke-width="1"/><path d="M3 5 H13 M3 8 H13 M3 11 H13" stroke="#cfcfcf" stroke-width="1"/></svg>
<div class="a" style="left:2476px;top:986px;width:21px;height:20px;background:#3a3a3a;border:1px solid #5a5a5a;border-radius:2px"></div>
<svg class="a" style="left:2479px;top:989px;" width="15" height="14" viewBox="0 0 15 14"><rect x="1" y="1" width="13" height="12" fill="none" stroke="#e0e0e0" stroke-width="1.3"/></svg>
<div class="a" style="left:922.5px;top:138.8px;width:101.5px;height:140.7px;background:#777777;"></div>
<svg class="a" style="left:190px;top:146px;" width="62" height="82" viewBox="0 0 62 82"><path d="M0.6 0.6 H41.5 L60.6 19.7 V80.6 H0.6 Z" fill="#f7f7f7" stroke="#9a9a9a" stroke-width="1"/><path d="M41.5 0.6 V19.7 H60.6" fill="#e9e9e9" stroke="#a8a8a8" stroke-width="1"/></svg>
<svg class="a" style="left:172.3px;top:210px;" width="24" height="24" viewBox="0 0 24 24"><circle cx="12" cy="12" r="11.3" fill="#178a4c" stroke="#0d2a1a" stroke-width="1"/><path d="M6.8 12.3 L10.4 15.6 L17 8.8" fill="none" stroke="#fff" stroke-width="2.2"/></svg>
<div class="t" style="left:198.50px;top:234.32px;font-size:13px;color:#f0f0f0;font-family:'Liberation Sans';transform:scaleX(0.7671);">X SCRIPT</div>
<div class="t" style="left:186.50px;top:249.02px;font-size:13px;color:#f0f0f0;font-family:'Liberation Sans';transform:scaleX(0.8810);">MONOGRAM</div>
<div class="t" style="left:182.50px;top:263.72px;font-size:13px;color:#f0f0f0;font-family:'Liberation Sans';transform:scaleX(0.8500);">2004 DWG.dwg</div>
<svg class="a" style="left:298px;top:146px;" width="62" height="82" viewBox="0 0 62 82"><path d="M0.6 0.6 H41.5 L60.6 19.7 V80.6 H0.6 Z" fill="#f7f7f7" stroke="#9a9a9a" stroke-width="1"/><path d="M41.5 0.6 V19.7 H60.6" fill="#e9e9e9" stroke="#a8a8a8" stroke-width="1"/></svg>
<svg class="a" style="left:279.7px;top:210px;" width="24" height="24" viewBox="0 0 24 24"><circle cx="12" cy="12" r="11.3" fill="#178a4c" stroke="#0d2a1a" stroke-width="1"/><path d="M6.8 12.3 L10.4 15.6 L17 8.8" fill="none" stroke="#fff" stroke-width="2.2"/></svg>
<div class="t" style="left:305.90px;top:234.32px;font-size:13px;color:#f0f0f0;font-family:'Liberation Sans';transform:scaleX(0.7671);">X SCRIPT</div>
<div class="t" style="left:293.90px;top:249.02px;font-size:13px;color:#f0f0f0;font-family:'Liberation Sans';transform:scaleX(0.8810);">MONOGRAM</div>
<div class="t" style="left:295.40px;top:263.72px;font-size:13px;color:#f0f0f0;font-family:'Liberation Sans';transform:scaleX(0.8585);">2004 DXF.dxf</div>
<svg class="a" style="left:405px;top:146px;" width="62" height="82" viewBox="0 0 62 82"><path d="M0.6 0.6 H41.5 L60.6 19.7 V80.6 H0.6 Z" fill="#f7f7f7" stroke="#9a9a9a" stroke-width="1"/><path d="M41.5 0.6 V19.7 H60.6" fill="#e9e9e9" stroke="#a8a8a8" stroke-width="1"/></svg>
<svg class="a" style="left:387.1px;top:210px;" width="24" height="24" viewBox="0 0 24 24"><circle cx="12" cy="12" r="11.3" fill="#178a4c" stroke="#0d2a1a" stroke-width="1"/><path d="M6.8 12.3 L10.4 15.6 L17 8.8" fill="none" stroke="#fff" stroke-width="2.2"/></svg>
<div class="t" style="left:413.30px;top:234.32px;font-size:13px;color:#f0f0f0;font-family:'Liberation Sans';transform:scaleX(0.7671);">X SCRIPT</div>
<div class="t" style="left:401.30px;top:249.02px;font-size:13px;color:#f0f0f0;font-family:'Liberation Sans';transform:scaleX(0.8810);">MONOGRAM</div>
<div class="t" style="left:397.80px;top:263.72px;font-size:13px;color:#f0f0f0;font-family:'Liberation Sans';transform:scaleX(0.8391);">2018 DWG.dwg</div>
<svg class="a" style="left:513px;top:146px;" width="62" height="82" viewBox="0 0 62 82"><path d="M0.6 0.6 H41.5 L60.6 19.7 V80.6 H0.6 Z" fill="#f7f7f7" stroke="#9a9a9a" stroke-width="1"/><path d="M41.5 0.6 V19.7 H60.6" fill="#e9e9e9" stroke="#a8a8a8" stroke-width="1"/></svg>
<svg class="a" style="left:494.50000000000006px;top:210px;" width="24" height="24" viewBox="0 0 24 24"><circle cx="12" cy="12" r="11.3" fill="#178a4c" stroke="#0d2a1a" stroke-width="1"/><path d="M6.8 12.3 L10.4 15.6 L17 8.8" fill="none" stroke="#fff" stroke-width="2.2"/></svg>
<div class="t" style="left:520.70px;top:234.32px;font-size:13px;color:#f0f0f0;font-family:'Liberation Sans';transform:scaleX(0.7671);">X SCRIPT</div>
<div class="t" style="left:508.70px;top:249.02px;font-size:13px;color:#f0f0f0;font-family:'Liberation Sans';transform:scaleX(0.8810);">MONOGRAM</div>
<div class="t" style="left:510.45px;top:263.72px;font-size:13px;color:#f0f0f0;font-family:'Liberation Sans';transform:scaleX(0.8521);">2018 DXF.dxf</div>
<div class="a" style="left:605px;top:141.5px;width:89px;height:88px;background:#ffffff;"></div>
<svg class="a" style="left:606px;top:142.5px;" width="86" height="86" viewBox="0 0 86 86"><use href="#mono" width="86" height="86" fill="#000" stroke="#000" stroke-width="2"/><circle cx="43" cy="43" r="40.5" fill="none" stroke="#000" stroke-width="1.6"/></svg>
<svg class="a" style="left:603.3000000000001px;top:210px;" width="24" height="24" viewBox="0 0 24 24"><circle cx="12" cy="12" r="11.3" fill="#178a4c" stroke="#0d2a1a" stroke-width="1"/><path d="M6.8 12.3 L10.4 15.6 L17 8.8" fill="none" stroke="#fff" stroke-width="2.2"/></svg>
<div class="t" style="left:628.10px;top:234.32px;font-size:13px;color:#f0f0f0;font-family:'Liberation Sans';transform:scaleX(0.7671);">X SCRIPT</div>
<div class="t" style="left:616.10px;top:249.02px;font-size:13px;color:#f0f0f0;font-family:'Liberation Sans';transform:scaleX(0.8810);">MONOGRAM</div>
<div class="t" style="left:640.90px;top:263.72px;font-size:13px;color:#f0f0f0;font-family:'Liberation Sans';transform:scaleX(0.8064);">JPG</div>
<div class="a" style="left:713px;top:141px;width:89px;height:89px;background:#1c1c1c;"></div>
<svg class="a" style="left:713.5px;top:141.6px;" width="87.5" height="87.7" viewBox="0 0 87.5 87.7"><use href="#mono" width="87.5" height="87.7" fill="#000" stroke="#000" stroke-width="3"/><circle cx="43.75" cy="43.85" r="41.5" fill="none" stroke="#000" stroke-width="2"/></svg>
<svg class="a" style="left:710.7px;top:210px;" width="24" height="24" viewBox="0 0 24 24"><circle cx="12" cy="12" r="11.3" fill="#178a4c" stroke="#0d2a1a" stroke-width="1"/><path d="M6.8 12.3 L10.4 15.6 L17 8.8" fill="none" stroke="#fff" stroke-width="2.2"/></svg>
<div class="t" style="left:735.50px;top:234.32px;font-size:13px;color:#f0f0f0;font-family:'Liberation Sans';transform:scaleX(0.7671);">X SCRIPT</div>
<div class="t" style="left:723.50px;top:249.02px;font-size:13px;color:#f0f0f0;font-family:'Liberation Sans';transform:scaleX(0.8810);">MONOGRAM</div>
<div class="t" style="left:746.60px;top:263.72px;font-size:13px;color:#f0f0f0;font-family:'Liberation Sans';transform:scaleX(0.8448);">PNG</div>
<div class="a" style="left:819px;top:166px;width:90px;height:65px;background:#000;"></div>
<div class="a" style="left:820px;top:167px;width:88px;height:63px;background:#fdfdfd;"></div>
<svg class="a" style="left:842.3px;top:176.3px;" width="43.4" height="43.4" viewBox="0 0 43.4 43.4"><use href="#pvimg" width="43.4" height="43.4"/></svg>
<svg class="a" style="left:818.1000000000001px;top:210px;" width="24" height="24" viewBox="0 0 24 24"><circle cx="12" cy="12" r="11.3" fill="#178a4c" stroke="#0d2a1a" stroke-width="1"/><path d="M6.8 12.3 L10.4 15.6 L17 8.8" fill="none" stroke="#fff" stroke-width="2.2"/></svg>
<div class="t" style="left:842.90px;top:234.32px;font-size:13px;color:#f0f0f0;font-family:'Liberation Sans';transform:scaleX(0.7671);">X SCRIPT</div>
<div class="t" style="left:830.90px;top:249.02px;font-size:13px;color:#f0f0f0;font-family:'Liberation Sans';transform:scaleX(0.8810);">MONOGRAM</div>
<div class="t" style="left:856.00px;top:263.72px;font-size:13px;color:#f0f0f0;font-family:'Liberation Sans';transform:scaleX(0.8056);">PV1</div>
<svg class="a" style="left:927.5px;top:141.4px;" width="89" height="89" viewBox="0 0 89 89"><use href="#pvimg" width="89" height="89"/></svg>
<svg class="a" style="left:925.5000000000001px;top:210px;" width="24" height="24" viewBox="0 0 24 24"><circle cx="12" cy="12" r="11.3" fill="#178a4c" stroke="#0d2a1a" stroke-width="1"/><path d="M6.8 12.3 L10.4 15.6 L17 8.8" fill="none" stroke="#fff" stroke-width="2.2"/></svg>
<div class="t" style="left:950.30px;top:234.32px;font-size:13px;color:#f0f0f0;font-family:'Liberation Sans';transform:scaleX(0.7671);">X SCRIPT</div>
<div class="t" style="left:938.30px;top:249.02px;font-size:13px;color:#f0f0f0;font-family:'Liberation Sans';transform:scaleX(0.8810);">MONOGRAM</div>
<div class="t" style="left:963.40px;top:263.72px;font-size:13px;color:#f0f0f0;font-family:'Liberation Sans';transform:scaleX(0.8056);">PV2</div>
<svg class="a" style="left:1033.9px;top:139.8px;" width="93.6" height="93.6" viewBox="0 0 93.6 93.6"><g transform="translate(46.8,46.8)">
<path d="M0 0 L-40.53 -23.40 A46.8 46.8 0 0 1 40.53 -23.40 Z" fill="#db3b2f"/>
<path d="M0 0 L40.53 -23.40 A46.8 46.8 0 0 1 0.00 46.80 Z" fill="#f7c12f"/>
<path d="M0 0 L0.00 46.80 A46.8 46.8 0 0 1 -40.53 -23.40 Z" fill="#229a48"/>
<path d="M-40.7 -23.5 L-21 12 L0 -21 Z" fill="#db3b2f"/>
<path d="M40.7 -23.5 L0 -21 L18 10 Z" fill="#f7c12f"/>
<path d="M0 47 L-21 12 L18 10 Z" fill="#229a48"/>
<path d="M-40.7 -23.5 A47 47 0 0 1 40.7 -23.5 L0 -23.5 Z" fill="#db3b2f"/>
<path d="M40.7 -23.5 A47 47 0 0 1 2 47 L20.5 10 Z" fill="#f7c12f"/>
<path d="M2 47 A47 47 0 0 1 -40.7 -23.5 L-20 12 Z" fill="#229a48"/>
<circle r="23.3" fill="#fff"/><circle r="19" fill="#3a7de6"/></g></svg>
<svg class="a" style="left:1032.9px;top:210px;" width="24" height="24" viewBox="0 0 24 24"><circle cx="12" cy="12" r="11.3" fill="#178a4c" stroke="#0d2a1a" stroke-width="1"/><path d="M6.8 12.3 L10.4 15.6 L17 8.8" fill="none" stroke="#fff" stroke-width="2.2"/></svg>
<div class="t" style="left:1057.70px;top:234.32px;font-size:13px;color:#f0f0f0;font-family:'Liberation Sans';transform:scaleX(0.7671);">X SCRIPT</div>
<div class="t" style="left:1045.70px;top:249.02px;font-size:13px;color:#f0f0f0;font-family:'Liberation Sans';transform:scaleX(0.8810);">MONOGRAM</div>
<div class="t" style="left:1052.45px;top:263.72px;font-size:13px;color:#f0f0f0;font-family:'Liberation Sans';transform:scaleX(0.7519);">SVG FILLED</div>
<svg class="a" style="left:1141.3px;top:139.8px;" width="93.6" height="93.6" viewBox="0 0 93.6 93.6"><g transform="translate(46.8,46.8)">
<path d="M0 0 L-40.53 -23.40 A46.8 46.8 0 0 1 40.53 -23.40 Z" fill="#db3b2f"/>
<path d="M0 0 L40.53 -23.40 A46.8 46.8 0 0 1 0.00 46.80 Z" fill="#f7c12f"/>
<path d="M0 0 L0.00 46.80 A46.8 46.8 0 0 1 -40.53 -23.40 Z" fill="#229a48"/>
<path d="M-40.7 -23.5 L-21 12 L0 -21 Z" fill="#db3b2f"/>
<path d="M40.7 -23.5 L0 -21 L18 10 Z" fill="#f7c12f"/>
<path d="M0 47 L-21 12 L18 10 Z" fill="#229a48"/>
<path d="M-40.7 -23.5 A47 47 0 0 1 40.7 -23.5 L0 -23.5 Z" fill="#db3b2f"/>
<path d="M40.7 -23.5 A47 47 0 0 1 2 47 L20.5 10 Z" fill="#f7c12f"/>
<path d="M2 47 A47 47 0 0 1 -40.7 -23.5 L-20 12 Z" fill="#229a48"/>
<circle r="23.3" fill="#fff"/><circle r="19" fill="#3a7de6"/></g></svg>
<svg class="a" style="left:1140.3px;top:210px;" width="24" height="24" viewBox="0 0 24 24"><circle cx="12" cy="12" r="11.3" fill="#178a4c" stroke="#0d2a1a" stroke-width="1"/><path d="M6.8 12.3 L10.4 15.6 L17 8.8" fill="none" stroke="#fff" stroke-width="2.2"/></svg>
<div class="t" style="left:1165.10px;top:234.32px;font-size:13px;color:#f0f0f0;font-family:'Liberation Sans';transform:scaleX(0.7671);">X SCRIPT</div>
<div class="t" style="left:1153.10px;top:249.02px;font-size:13px;color:#f0f0f0;font-family:'Liberation Sans';transform:scaleX(0.8810);">MONOGRAM</div>
<div class="t" style="left:1178.10px;top:263.72px;font-size:13px;color:#f0f0f0;font-family:'Liberation Sans';transform:scaleX(0.7281);">SVG</div>
<svg class="a" style="left:1253px;top:152px;" width="84" height="66" viewBox="0 0 84 66"><defs><linearGradient id="zipg" x1="0" y1="0" x2="0" y2="1"><stop offset="0" stop-color="#fde49a"/><stop offset="1" stop-color="#f8d060"/></linearGradient></defs><path d="M0.5 5 Q0.5 0.5 5 0.5 H25 Q28 0.5 30 2.5 L36 9 H79 Q83.5 9 83.5 13 V60 Q83.5 65 79 65 H5 Q0.5 65 0.5 60 Z" fill="#f4b72c"/><path d="M0.5 13 Q0.5 9.5 4 9.5 H80 Q83.5 9.5 83.5 13 V60 Q83.5 65 79 65 H5 Q0.5 65 0.5 60 Z" fill="url(#zipg)"/><rect x="3" y="36" width="80" height="6" fill="#e7dcc0"/><path d="M10 36.5 L12 41.5 L14 36.5 L16 41.5 L18 36.5 L20 41.5 L22 36.5 L24 41.5 L26 36.5 L28 41.5 L30 36.5 L32 41.5 L34 36.5 L36 41.5 L38 36.5 L40 41.5 L42 36.5 L44 41.5 L46 36.5 L48 41.5 L50 36.5 L52 41.5 L54 36.5 L56 41.5 L58 36.5 L60 41.5 L62 36.5 L64 41.5 L66 36.5 L68 41.5 L70 36.5 L72 41.5 L74 36.5 L76 41.5 L78 36.5" fill="none" stroke="#5a4a30" stroke-width="1.2"/><rect x="0" y="34" width="10" height="9" rx="2" fill="#c8c8c8"/><rect x="8" y="42" width="5" height="16" rx="1.5" fill="#bdbdbd"/><rect x="79" y="35" width="5" height="7" rx="1.5" fill="#cfcfcf"/></svg>
<svg class="a" style="left:1247.7px;top:210px;" width="24" height="24" viewBox="0 0 24 24"><circle cx="12" cy="12" r="11.3" fill="#178a4c" stroke="#0d2a1a" stroke-width="1"/><path d="M6.8 12.3 L10.4 15.6 L17 8.8" fill="none" stroke="#fff" stroke-width="2.2"/></svg>
<div class="t" style="left:1272.50px;top:234.32px;font-size:13px;color:#f0f0f0;font-family:'Liberation Sans';transform:scaleX(0.7671);">X SCRIPT</div>
<div class="t" style="left:1260.50px;top:249.02px;font-size:13px;color:#f0f0f0;font-family:'Liberation Sans';transform:scaleX(0.8810);">MONOGRAM</div>
<div class="a" style="left:1513.5px;top:138.6px;width:836.5px;height:836.6px;background:#050505;"></div>
<svg class="a" style="left:1515px;top:139.6px;" width="834" height="834.4" viewBox="0 0 834 834.4"><use href="#pvimg" width="834" height="834.4"/></svg>
<svg class="a" style="left:18px;top:1012px;" width="30" height="30" viewBox="0 0 30 30"><defs><linearGradient id="sun" x1="0" y1="0" x2="1" y2="1"><stop offset="0" stop-color="#f8b52a"/><stop offset="1" stop-color="#f0701c"/></linearGradient></defs><circle cx="11.4" cy="18.5" r="9.8" fill="url(#sun)"/><circle cx="19.6" cy="9.2" r="7.2" fill="#f2a3b3" stroke="#1c2735" stroke-width="0.8"/><text x="19.6" y="12.8" font-size="10" font-family="Liberation Sans" fill="#2a1a20" text-anchor="middle">1</text></svg>
<div class="t" style="left:49.60px;top:1018.24px;font-size:11px;color:#f2f2f2;font-family:'Liberation Sans';font-weight:700;transform:scaleX(0.9846);">72°F</div>
<div class="t" style="left:49.60px;top:1034.16px;font-size:11.5px;color:#dfe3e8;font-family:'Liberation Sans';transform:scaleX(0.9874);">Sunny</div>
<svg class="a" style="left:979.6px;top:1020.6px;" width="23" height="23" viewBox="0 0 23 23"><defs><linearGradient id="win" x1="0" y1="0" x2="1" y2="1"><stop offset="0" stop-color="#6fd6ff"/><stop offset="1" stop-color="#1e90f0"/></linearGradient></defs><rect x="0" y="0" width="10.8" height="10.8" rx="1" fill="url(#win)"/><rect x="11.8" y="0" width="10.8" height="10.8" rx="1" fill="url(#win)"/><rect x="0" y="11.8" width="10.8" height="10.8" rx="1" fill="url(#win)"/><rect x="11.8" y="11.8" width="10.8" height="10.8" rx="1" fill="url(#win)"/></svg>
<div class="a" style="left:1015px;top:1015.8px;width:214.2px;height:31.2px;background:#2b3a64;border-radius:16px;border:1px solid #46557e"></div>
<svg class="a" style="left:1025px;top:1023px;" width="17" height="17" viewBox="0 0 17 17"><circle cx="7.4" cy="7.6" r="5.6" fill="none" stroke="#e6e6e6" stroke-width="1.6"/><path d="M11.4 11.8 L15.3 15.7" stroke="#e6e6e6" stroke-width="1.8"/></svg>
<div class="t" style="left:1051.00px;top:1024.44px;font-size:13.5px;color:#e4e6ee;font-family:'Liberation Sans';transform:scaleX(0.9116);">Search</div>
<svg class="a" style="left:1180px;top:1020px;" width="46" height="26" viewBox="0 0 46 26"><ellipse cx="22" cy="22" rx="21" ry="3.5" fill="#e8d7a8"/><path d="M6 21 Q12 8 24 5" stroke="#b8b0a0" stroke-width="2.5" fill="none"/><circle cx="15" cy="18" r="3.5" fill="#8aa0e8"/><rect x="22" y="6" width="3" height="15" fill="#3c9a4a"/><rect x="26" y="4" width="8" height="17" fill="#d7902e"/><rect x="35" y="3" width="3" height="18" fill="#c83a2a"/><rect x="39" y="6" width="3" height="15" fill="#9a9a8a"/></svg>
<svg class="a" style="left:1241px;top:1020px;" width="24" height="23" viewBox="0 0 24 23"><rect x="0" y="7" width="17" height="15.5" rx="1" fill="#6a6f7a"/><rect x="6" y="0" width="17.5" height="16" rx="1" fill="#f4f4f6"/><rect x="6" y="7" width="11" height="9" fill="#bfc2c8"/></svg>
<div class="a" style="left:1276.2px;top:1012.2px;width:39px;height:38.4px;background:#252d52;border-radius:4px;border:1px solid #2f3760"></div>
<svg class="a" style="left:1283.5px;top:1019.4px;" width="25" height="23" viewBox="0 0 25 23"><path d="M0 2.5 Q0 0 2.5 0 H9 L12 3 H22.5 Q25 3 25 5.5 V22 H0 Z" fill="#e9b63c"/><path d="M0 6 H25 V22 H0 Z" fill="#fbd46a"/><rect x="5" y="15" width="15" height="8" rx="1.5" fill="#1f6fd0"/></svg>
<div class="a" style="left:1287.7px;top:1047px;width:16.1px;height:3.1px;background:#5cb7f1;border-radius:2px"></div>
<svg class="a" style="left:1326.8px;top:1019px;" width="24.4" height="24.4" viewBox="0 0 24.4 24.4"><g transform="translate(12.2,12.2)"><path d="M0 0 L-10.57 -6.10 A12.2 12.2 0 0 1 10.57 -6.10 Z" fill="#db3b2f"/><path d="M0 0 L10.57 -6.10 A12.2 12.2 0 0 1 0.00 12.20 Z" fill="#f7c12f"/><path d="M0 0 L0.00 12.20 A12.2 12.2 0 0 1 -10.57 -6.10 Z" fill="#229a48"/><circle r="5.73" fill="#fff"/><circle r="4.51" fill="#3a78e2"/></g></svg>
<svg class="a" style="left:1372.4px;top:1019.4px;" width="19" height="23.4" viewBox="0 0 19 23.4"><rect x="0.5" y="0.5" width="18" height="22.4" rx="1.5" fill="#8fa3b8"/><rect x="2.5" y="2.5" width="14" height="4" fill="#5cc6ec"/><g fill="#e8eef4"><rect x="2.5" y="8.5" width="4" height="4"/><rect x="7.5" y="8.5" width="4" height="4"/><rect x="12.5" y="8.5" width="4" height="4"/><rect x="2.5" y="13.5" width="4" height="4"/><rect x="7.5" y="13.5" width="4" height="4"/><rect x="2.5" y="18" width="4" height="3.5"/><rect x="7.5" y="18" width="4" height="3.5"/></g><rect x="12.5" y="13.5" width="4" height="8" fill="#2b3f5c"/></svg>
<div class="a" style="left:1414.6px;top:1020.5px;width:20.8px;height:20.8px;background:#330a04;border-radius:3px"></div>
<div class="t" style="left:1418.50px;top:1024.16px;font-size:11.5px;color:#ff9a1a;font-family:'Liberation Sans';font-weight:700;transform:scaleX(1.1304);">Ai</div>
<div class="a" style="left:1421.8px;top:1047.5px;width:6.2px;height:2.5px;background:#9aa2b4;border-radius:1px"></div>
<svg class="a" style="left:1456px;top:1020.5px;" width="23" height="21" viewBox="0 0 23 21"><path d="M1 19 L5 15 L8 17 L4 21 Z" fill="#d0d0d0"/><path d="M5 15 L18 2 L22 6 L9 19 Z" fill="#a8a8a8"/><path d="M7 15 L19 3" stroke="#e8e8e8" stroke-width="1.5"/><path d="M9 17 L20 6" stroke="#707070" stroke-width="1"/></svg>
<div class="a" style="left:1464.5px;top:1047.5px;width:6.2px;height:2.5px;background:#9aa2b4;border-radius:1px"></div>
<svg class="a" style="left:1498.3px;top:1019.2px;" width="24.4" height="24.4" viewBox="0 0 24.4 24.4"><g transform="translate(12.2,12.2)"><path d="M0 0 L-10.57 -6.10 A12.2 12.2 0 0 1 10.57 -6.10 Z" fill="#db3b2f"/><path d="M0 0 L10.57 -6.10 A12.2 12.2 0 0 1 0.00 12.20 Z" fill="#f7c12f"/><path d="M0 0 L0.00 12.20 A12.2 12.2 0 0 1 -10.57 -6.10 Z" fill="#229a48"/><circle r="5.73" fill="#fff"/><circle r="4.51" fill="#3a78e2"/></g></svg>
<svg class="a" style="left:1512px;top:1015px;" width="15" height="15" viewBox="0 0 15 15"><circle cx="7.5" cy="7.5" r="6.5" fill="#2a5a6a" stroke="#1a3a48" stroke-width="1"/></svg>
<div class="a" style="left:1507px;top:1047.5px;width:6.2px;height:2.5px;background:#9aa2b4;border-radius:1px"></div>
<svg class="a" style="left:2287px;top:1028px;" width="12" height="7" viewBox="0 0 12 7"><path d="M1 6 L6 1 L11 6" fill="none" stroke="#e8e8e8" stroke-width="1.3"/></svg>
<svg class="a" style="left:2316px;top:1023px;" width="17" height="16" viewBox="0 0 17 16"><rect x="0.7" y="1.2" width="11" height="9" rx="0.8" fill="none" stroke="#e0e0e0" stroke-width="1.1"/><path d="M3 14.6 H10 M6.2 10.2 V14.6" stroke="#e0e0e0" stroke-width="1.1"/><rect x="12.5" y="0.7" width="3.5" height="4.5" rx="0.8" fill="none" stroke="#e0e0e0" stroke-width="1"/><path d="M14.2 5.2 V15.5" stroke="#e0e0e0" stroke-width="1"/></svg>
<svg class="a" style="left:2340px;top:1024px;" width="17" height="15" viewBox="0 0 17 15"><path d="M0.7 5 H3.5 L7.5 1 V14 L3.5 10 H0.7 Z" fill="none" stroke="#e0e0e0" stroke-width="1.1"/><path d="M10 4.5 Q11.5 7.5 10 10.5 M12.3 2.7 Q15 7.5 12.3 12.3 M14.6 0.8 Q18.5 7.5 14.6 14.2" fill="none" stroke="#e0e0e0" stroke-width="1.1"/></svg>
<div class="t" style="left:2375.80px;top:1018.64px;font-size:11px;color:#f2f2f2;font-family:'Liberation Sans';transform:scaleX(1.0530);">9:54 AM</div>
<div class="t" style="left:2371.60px;top:1033.34px;font-size:11px;color:#f2f2f2;font-family:'Liberation Sans';transform:scaleX(1.0974);">7/3/2024</div>
<svg class="a" style="left:2427px;top:1024px;" width="13.5" height="15.5" viewBox="0 0 13.5 15.5"><path d="M6.75 0.5 Q11.5 0.5 11.5 6 V10 L13 12 H0.5 L2 10 V6 Q2 0.5 6.75 0.5 Z" fill="#8fe0f4"/><path d="M4.8 13.5 Q6.75 15.5 8.7 13.5" fill="#8fe0f4" stroke="#8fe0f4"/></svg>
<svg class="a" style="left:2457.7px;top:1021.3px;" width="23" height="22.5" viewBox="0 0 23 22.5"><defs><linearGradient id="cop" x1="0.2" y1="0" x2="0.4" y2="1"><stop offset="0" stop-color="#2a8cf0"/><stop offset="0.45" stop-color="#3cc8c0"/><stop offset="0.75" stop-color="#86d45a"/><stop offset="1" stop-color="#f0c030"/></linearGradient><linearGradient id="cop2" x1="0" y1="0" x2="1" y2="1"><stop offset="0" stop-color="#7a5af0"/><stop offset="1" stop-color="#f060a0"/></linearGradient></defs><path d="M5 2.5 Q6 0.5 9 0.5 H14 Q16 0.5 15.5 2.5 L11 17 Q10 19 7 19 H3 Q0.5 19 1.2 16.5 Z" fill="url(#cop)"/><path d="M12 7 Q13 5.5 15 5.5 H19.5 Q22 5.5 21.5 8 L18.5 17 Q17.8 19 15.5 19 H10 Z" fill="url(#cop2)"/><rect x="6.5" y="14.5" width="16" height="8" rx="2.5" fill="#f5c542"/><text x="14.5" y="21" font-size="6.2" font-weight="700" font-family="Liberation Sans" fill="#2a2200" text-anchor="middle">PRE</text></svg>
</body></html>
